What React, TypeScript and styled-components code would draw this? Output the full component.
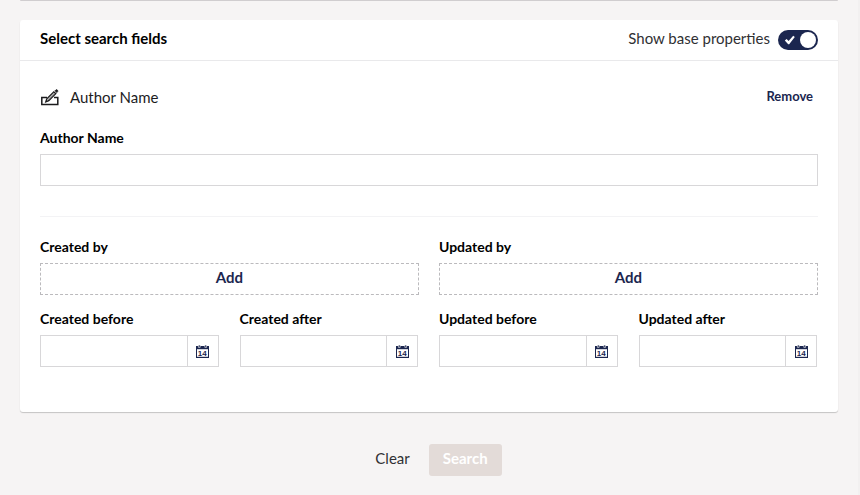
import React, { useId, useState } from "react";
import styled, { createGlobalStyle } from "styled-components";

const navy = "#1b264f";

const GlobalStyle = createGlobalStyle`
  *, *::before, *::after { box-sizing: border-box; }
  body {
    margin: 0;
    background: #f6f4f4;
    color: #000;
    font-family: Lato, "Open Sans", sans-serif;
    font-size: 15px;
    line-height: 20px;
  }
  button, input { font: inherit; color: inherit; }
`;

const Page = styled.main`
  display: flex;
  flex-direction: column;
  gap: 19px;
  min-height: 100vh;
  padding: 0 20px 19px;
  border-right: 2px solid #f2f0f0;
`;

const PreviousPanel = styled.div`
  height: 1px;
  background: #d0cdcf;
  border-radius: 0 0 3px 3px;
`;

const Panel = styled.section`
  background: #fff;
  border-radius: 3px;
  box-shadow: 0 1px 1px rgba(0, 0, 0, 0.2);
`;

const PanelHeader = styled.header`
  display: flex;
  align-items: center;
  justify-content: space-between;
  height: 41px;
  padding: 0 20px;
  border-bottom: 1px solid #e9e9eb;
`;

const Title = styled.h2`
  margin: 0;
  padding-bottom: 4px;
  font-size: 15px;
  font-weight: 700;
`;

const ToggleLabel = styled.label`
  display: flex;
  align-items: center;
  gap: 8px;
  color: #303033;
  cursor: pointer;
`;

const ToggleText = styled.span`
  padding-bottom: 4px;
`;

const ToggleInput = styled.input`
  position: absolute;
  width: 1px;
  height: 1px;
  margin: 0;
  opacity: 0;
`;

const ToggleTrack = styled.span<{ $on: boolean }>`
  display: flex;
  align-items: center;
  justify-content: space-between;
  flex-direction: ${(p) => (p.$on ? "row" : "row-reverse")};
  width: 40px;
  height: 20px;
  padding: 0 2px 0 6px;
  border-radius: 10px;
  background: ${(p) => (p.$on ? navy : "#c4c4c4")};
`;

const ToggleKnob = styled.span`
  width: 16px;
  height: 16px;
  border-radius: 50%;
  background: #fff;
`;

const PanelBody = styled.div`
  padding: 26px 20px 45px;
`;

const Property = styled.div`
  padding-bottom: 30px;
  border-bottom: 1px solid #f3f3f5;
`;

const PropertyHead = styled.div`
  display: flex;
  align-items: center;
  gap: 10px;
  height: 22px;
  margin-bottom: 20px;
`;

const PropertyName = styled.span`
  flex: 1;
  padding-bottom: 2px;
  color: #1c1c1e;
`;

const TextButton = styled.button`
  padding: 0 5px 4px;
  border: 0;
  background: none;
  color: ${navy};
  font-size: 13px;
  font-weight: 700;
  line-height: 18px;
  cursor: pointer;
`;

const FieldBox = styled.div`
  display: flex;
  flex-direction: column;
  min-width: 0;
`;

const FieldLabel = styled.label`
  margin-bottom: 7px;
  font-size: 14px;
  font-weight: 700;
  line-height: 18px;
`;

const TextInput = styled.input`
  width: 100%;
  min-width: 0;
  height: 32px;
  padding: 0 8px;
  border: 1px solid #d8d7d9;
  border-radius: 0;
  background: #fff;
  outline: none;
`;

const Columns = styled.div`
  display: grid;
  grid-template-columns: 1fr 1fr;
  gap: 15px 20px;
`;

const BaseProperties = styled(Columns)`
  padding-top: 21px;
`;

const AddButton = styled.button`
  height: 32px;
  padding: 0 0 4px;
  border: 1px dashed #bbbabd;
  background: none;
  color: ${navy};
  font-size: 15px;
  font-weight: 700;
  cursor: pointer;
`;

const DateGroup = styled.div`
  display: flex;
  padding-right: 1px;
`;

const DateButton = styled.button`
  display: flex;
  flex: none;
  align-items: center;
  justify-content: center;
  width: 31px;
  height: 32px;
  padding: 0;
  border: 1px solid #d8d7d9;
  border-left: 0;
  background: #fff;
  cursor: pointer;
`;

const Actions = styled.footer`
  display: flex;
  justify-content: center;
  gap: 5px;
  padding: 13px 0 0 5px;
`;

const ActionButton = styled.button<{ $filled?: boolean }>`
  height: 32px;
  padding: 0 14px 4px;
  border: 0;
  border-radius: 3px;
  background: ${(p) => (p.$filled ? "#e3dbd8" : "transparent")};
  color: ${(p) => (p.$filled ? "#fff" : "#303033")};
  font-weight: ${(p) => (p.$filled ? 700 : 400)};
`;

const CheckIcon = () => (
  <svg width="12" height="10" viewBox="0 0 12 10" aria-hidden="true">
    <path d="M0.8 5.4 2.6 4 4.6 6 9.2 0.8 10.8 2 5.2 9.2 4.2 9.2Z" fill="#fff" />
  </svg>
);

const EditIcon = () => (
  <svg width="20" height="20" viewBox="0 0 20 20" fill="none" stroke="#1b1b1d" aria-hidden="true">
    <path d="M7 9.5H1.8V16.4H17.8V9.5H14" strokeWidth="1.5" />
    <path d="M5.8 13.8 6.8 10.8 13.8 3.8 15.8 5.6 8.8 12.6Z" strokeWidth="1.3" />
    <path d="M7.4 12.2 14.8 4.8" strokeWidth="0.7" />
    <path d="M15 2.8 16 1.8Q16.6 1.4 17.2 2L17.8 2.6Q18.2 3.2 17.6 3.6L16.8 4.6Z" fill="#1b1b1d" strokeWidth="0.8" />
  </svg>
);

const CalendarIcon = () => (
  <svg width="15" height="15" viewBox="0 0 15 15" aria-hidden="true">
    <path d="M1 2H14V14H1Z" fill={navy} />
    <path d="M2 5.2H13V12.8H2Z" fill="#fff" />
    <path d="M3.4 1H5.2V3.4H3.4ZM9.8 1H11.6V3.4H9.8Z" fill={navy} stroke="#fff" strokeWidth="0.6" />
    <text
      x="7.3"
      y="12"
      textAnchor="middle"
      fill={navy}
      fontFamily="Liberation Sans, sans-serif"
      fontSize="8"
      fontWeight="700"
    >
      14
    </text>
  </svg>
);

function DateField({ label }: { label: string }) {
  const id = useId();
  return (
    <FieldBox>
      <FieldLabel htmlFor={id}>{label}</FieldLabel>
      <DateGroup>
        <TextInput id={id} type="text" />
        <DateButton type="button" aria-label={`Choose date: ${label}`}>
          <CalendarIcon />
        </DateButton>
      </DateGroup>
    </FieldBox>
  );
}

function UserField({ label }: { label: string }) {
  const id = useId();
  return (
    <FieldBox>
      <FieldLabel htmlFor={id}>{label}</FieldLabel>
      <AddButton id={id} type="button">Add</AddButton>
    </FieldBox>
  );
}

export default function App() {
  const [showBase, setShowBase] = useState(true);
  return (
    <>
      <GlobalStyle />
      <Page>
        <PreviousPanel />
        <Panel>
          <PanelHeader>
            <Title>Select search fields</Title>
            <ToggleLabel>
              <ToggleText>Show base properties</ToggleText>
              <ToggleInput
                type="checkbox"
                role="switch"
                checked={showBase}
                onChange={(e) => setShowBase(e.target.checked)}
              />
              <ToggleTrack $on={showBase}>
                <CheckIcon />
                <ToggleKnob />
              </ToggleTrack>
            </ToggleLabel>
          </PanelHeader>
          <PanelBody>
            <Property>
              <PropertyHead>
                <EditIcon />
                <PropertyName>Author Name</PropertyName>
                <TextButton type="button">Remove</TextButton>
              </PropertyHead>
              <FieldBox>
                <FieldLabel htmlFor="author-name">Author Name</FieldLabel>
                <TextInput id="author-name" type="text" />
              </FieldBox>
            </Property>
            {showBase && (
              <BaseProperties>
                <UserField label="Created by" />
                <UserField label="Updated by" />
                <Columns>
                  <DateField label="Created before" />
                  <DateField label="Created after" />
                </Columns>
                <Columns>
                  <DateField label="Updated before" />
                  <DateField label="Updated after" />
                </Columns>
              </BaseProperties>
            )}
          </PanelBody>
        </Panel>
        <Actions>
          <ActionButton type="button">Clear</ActionButton>
          <ActionButton type="button" $filled disabled>Search</ActionButton>
        </Actions>
      </Page>
    </>
  );
}
